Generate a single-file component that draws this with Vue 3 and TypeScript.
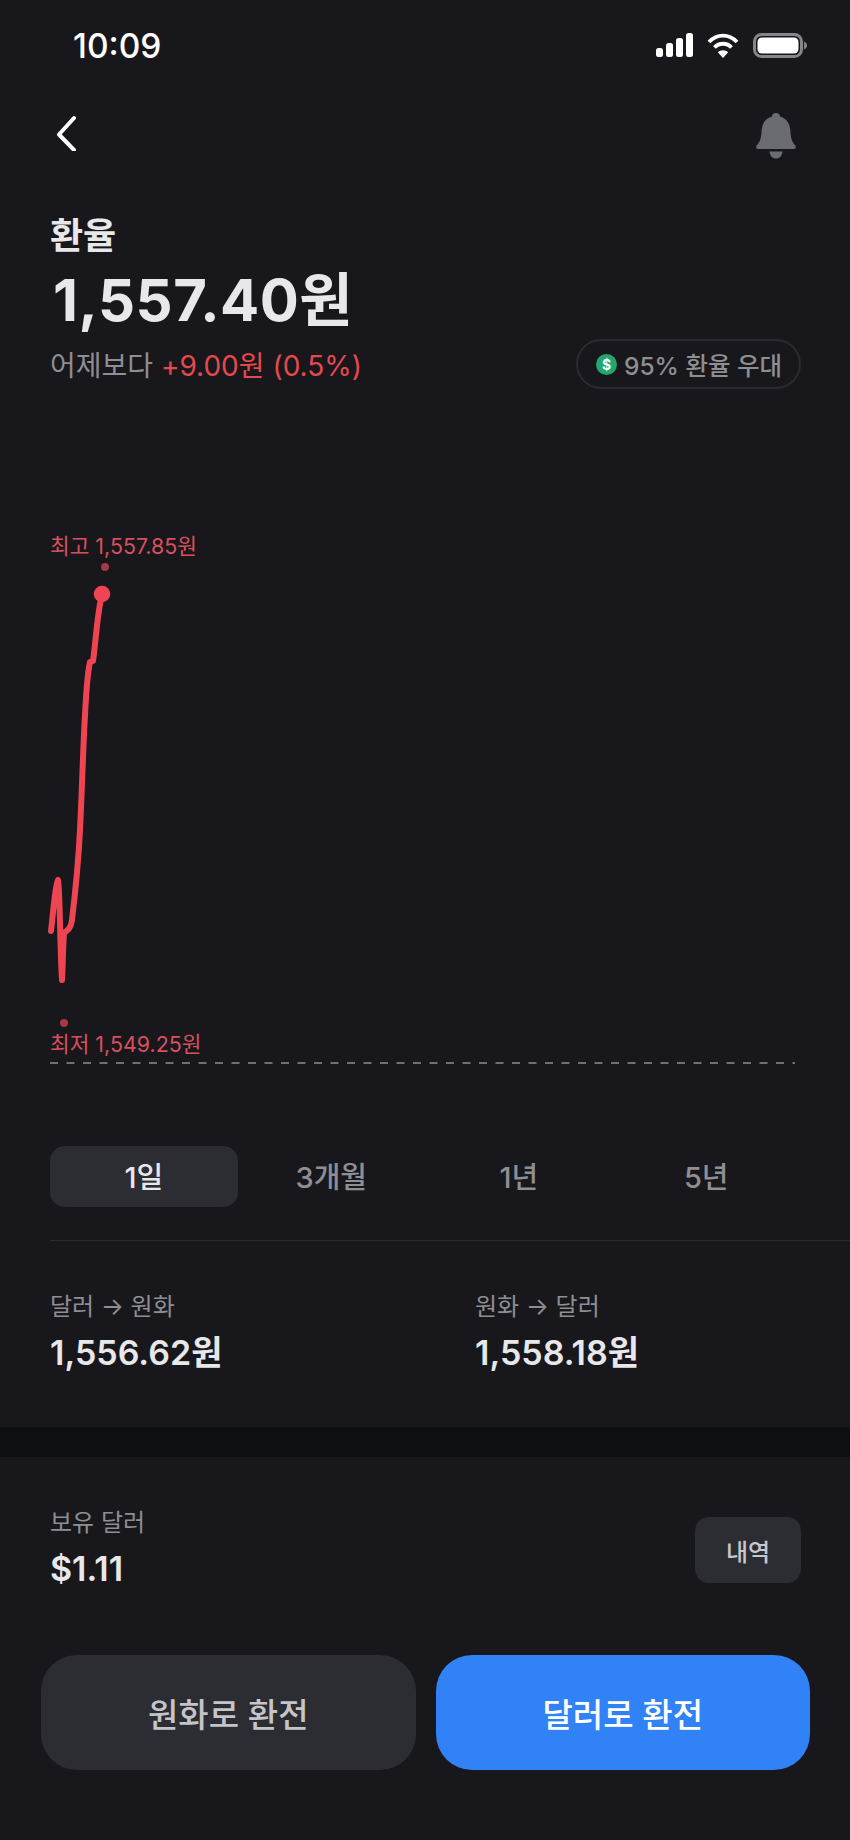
<script setup lang="ts">
const ranges = ['1일', '3개월', '1년', '5년']
const linePath = 'M51 931 C53 915 55 885 58 880 C60 890 60 950 62 980 C63 960 63 945 64 933 C68 930 71 928 72 920 C75 895 78 870 80 830 C82 790 83 750 85 715 C86 695 87 675 90 662 L93 661 C96 640 97 615 102 594'
</script>

<template>
  <div class="screen">
    <header class="status">
      <span class="time">10:09</span>
      <div class="status-icons">
        <svg width="37" height="24" viewBox="0 0 37 24" fill="#fff">
          <rect x="0" y="15" width="7" height="9" rx="2.5" />
          <rect x="10" y="10" width="7" height="14" rx="2.5" />
          <rect x="20" y="5" width="7" height="19" rx="2.5" />
          <rect x="30" y="0" width="7" height="24" rx="2.5" />
        </svg>
        <svg class="wifi" width="32" height="25" viewBox="0 0 32 25" fill="none" stroke="#fff" stroke-width="3.8">
          <path d="M2 9 C10 0.5 22 0.5 30 9" />
          <path d="M7.5 14.5 C12 9.5 20 9.5 24.500 14.5" />
          <path d="M16 25 L10.800 19.300 C13.500 16.500 18.500 16.500 21.200 19.300 Z" fill="#fff" stroke="none" />
        </svg>
        <svg width="54" height="25" viewBox="0 0 54 25">
          <rect x="1.500" y="1.500" width="47" height="22" rx="7" fill="none" stroke="#85858a" stroke-width="3" />
          <rect x="4.500" y="4.500" width="41" height="16" rx="4.500" fill="#fff" />
          <path d="M51 8.500 C53 9.500 54 11 54 12.500 C54 14 53 15.500 51 16.500 Z" fill="#85858a" />
        </svg>
      </div>
    </header>

    <nav class="nav">
      <svg width="22" height="38" viewBox="0 0 22 38" fill="none" stroke="#fff" stroke-width="4" stroke-linecap="round" stroke-linejoin="round">
        <path d="M20 5 L5 21.500 L20 37" />
      </svg>
      <svg width="42" height="46" viewBox="0 0 42 46" fill="#6b6b72">
        <path d="M21 0 C23.500 0 25 1.600 25.300 3.800 C32 5.600 35 11 35.400 18 C35.800 25 37 29 40 32 C41.500 33.600 41 36 38.500 36 L3.500 36 C1 36 0.500 33.600 2 32 C5 29 6.200 25 6.600 18 C7 11 10 5.600 16.700 3.800 C17 1.600 18.500 0 21 0 Z" />
        <path d="M14.500 38.500 L27.500 38.500 C27 43 24.500 45.500 21 45.500 C17.500 45.500 15 43 14.500 38.500 Z" />
      </svg>
    </nav>

    <section class="summary">
      <h1 class="title">환율</h1>
      <div class="price">1,557.40원</div>
      <div class="sub-row">
        <p class="change">어제보다 <span class="red">+9.00원 (0.5%)</span></p>
        <div class="pill">
          <span class="coin">$</span>
          <span>95% 환율 우대</span>
        </div>
      </div>
    </section>

    <section class="chart">
      <svg class="chart-svg" width="850" height="560" viewBox="0 520 850 560" fill="none">
        <circle cx="105" cy="567" r="4" fill="#a33a45" />
        <circle cx="64" cy="1023" r="4" fill="#a33a45" />
        <path :d="linePath" stroke="#ef4452" stroke-width="6" stroke-linecap="round" stroke-linejoin="round" />
        <circle cx="102" cy="594" r="8.300" fill="#ef4452" />
        <line x1="50" y1="1063" x2="795" y2="1063" stroke="#6f7075" stroke-width="2" stroke-dasharray="8 8.500" />
      </svg>
      <span class="chart-label high">최고 1,557.85원</span>
      <span class="chart-label low">최저 1,549.25원</span>
    </section>

    <div class="tabs">
      <button v-for="(r, i) in ranges" :key="r" class="tab" :class="{ active: i === 0 }">{{ r }}</button>
    </div>

    <section class="rates">
      <div class="rate">
        <div class="label">달러 → 원화</div>
        <div class="value">1,556.62원</div>
      </div>
      <div class="rate">
        <div class="label">원화 → 달러</div>
        <div class="value">1,558.18원</div>
      </div>
    </section>

    <div class="band"></div>

    <section class="holding">
      <div>
        <div class="label">보유 달러</div>
        <div class="value">$1.11</div>
      </div>
      <button class="history">내역</button>
    </section>

    <div class="actions">
      <button class="cta secondary">원화로 환전</button>
      <button class="cta primary">달러로 환전</button>
    </div>
  </div>
</template>

<style scoped>
.screen {
  width: 850px;
  height: 1840px;
  background: #17171c;
  overflow: hidden;
  font-family: Inter, "Noto Sans CJK KR", sans-serif;
  color: #e8e8ea;
}
.status {
  height: 92px;
  padding: 0 43px 0 73px;
  box-sizing: border-box;
  display: flex;
  justify-content: space-between;
  align-items: flex-start;
}
.time {
  margin-top: 27px;
  font-size: 33.5px;
  line-height: 39px;
  font-weight: 500;
  color: #fff;
}
.status-icons {
  margin-top: 33px;
  display: flex;
  align-items: flex-start;
  gap: 14px;
}
.nav {
  height: 121px;
  padding: 21px 53px 0 54px;
  box-sizing: border-box;
  display: flex;
  justify-content: space-between;
  align-items: flex-start;
}
.summary {
  padding: 0 49px 0 50px;
}
.title {
  margin: 0;
  font-size: 36px;
  line-height: 46px;
  font-weight: 600;
}
.price {
  margin-top: 6px;
  padding-left: 3px;
  font-size: 58px;
  line-height: 70px;
  font-weight: 700;
  letter-spacing: 0.5px;
}
.sub-row {
  margin-top: 4px;
  height: 50px;
  display: flex;
  justify-content: space-between;
  align-items: center;
}
.change {
  margin: 0;
  font-size: 28px;
  color: #8e8e93;
}
.red {
  color: #e5484d;
}
.pill {
  box-sizing: border-box;
  height: 50px;
  width: 225px;
  padding-left: 18px;
  border: 2px solid #2a2b30;
  border-radius: 25px;
  display: flex;
  align-items: center;
  gap: 7px;
  font-size: 24.5px;
  font-weight: 500;
  color: #8e8e93;
  white-space: nowrap;
}
.coin {
  width: 21px;
  height: 21px;
  border-radius: 50%;
  background: #23a76f;
  color: #fff;
  font-size: 14px;
  font-weight: 700;
  line-height: 21px;
  text-align: center;
  flex: none;
}
.chart {
  position: relative;
  height: 757px;
}
.chart-svg {
  position: absolute;
  left: 0;
  top: 131px;
}
.chart-label {
  position: absolute;
  left: 50px;
  font-size: 21.4px;
  line-height: 24px;
  color: #d9505c;
  white-space: nowrap;
}
.high {
  top: 145px;
}
.low {
  top: 643px;
}
.tabs {
  padding-left: 50px;
  display: grid;
  grid-template-columns: repeat(4, 187.5px);
}
.tab {
  height: 61px;
  border: 0;
  padding: 0 0 4px;
  border-radius: 15px;
  background: transparent;
  font-family: inherit;
  font-size: 29px;
  font-weight: 500;
  color: #8e8e93;
}
.tab.active {
  background: #2c2d33;
  color: #e8e8ea;
}
.rates {
  margin: 33px 0 0 50px;
  padding-top: 49px;
  height: 187px;
  box-sizing: border-box;
  border-top: 1px solid #2a2b30;
  display: grid;
  grid-template-columns: 425px 1fr;
}
.label {
  font-size: 24px;
  line-height: 34px;
  color: #8e8e93;
}
.value {
  margin-top: 9px;
  font-size: 34px;
  line-height: 40px;
  font-weight: 600;
  color: #e8e8ea;
}
.band {
  height: 30px;
  background: #0e0f11;
}
.holding {
  padding: 49px 49px 0 50px;
  height: 198px;
  box-sizing: border-box;
  display: flex;
  justify-content: space-between;
  align-items: flex-start;
}
.history {
  margin-top: 11px;
  width: 106px;
  height: 66px;
  border: 0;
  border-radius: 14px;
  background: #2c2d33;
  font-family: inherit;
  font-size: 24px;
  font-weight: 500;
  color: #c8c8cc;
}
.actions {
  padding: 0 40px 0 41px;
  display: grid;
  grid-template-columns: 1fr 1fr;
  gap: 20px;
}
.cta {
  height: 115px;
  border: 0;
  border-radius: 36px;
  font-family: inherit;
  font-size: 33px;
  font-weight: 500;
}
.secondary {
  background: #2c2d33;
  color: #c5c5c9;
}
.primary {
  background: #3182f6;
  color: #fff;
}
</style>
